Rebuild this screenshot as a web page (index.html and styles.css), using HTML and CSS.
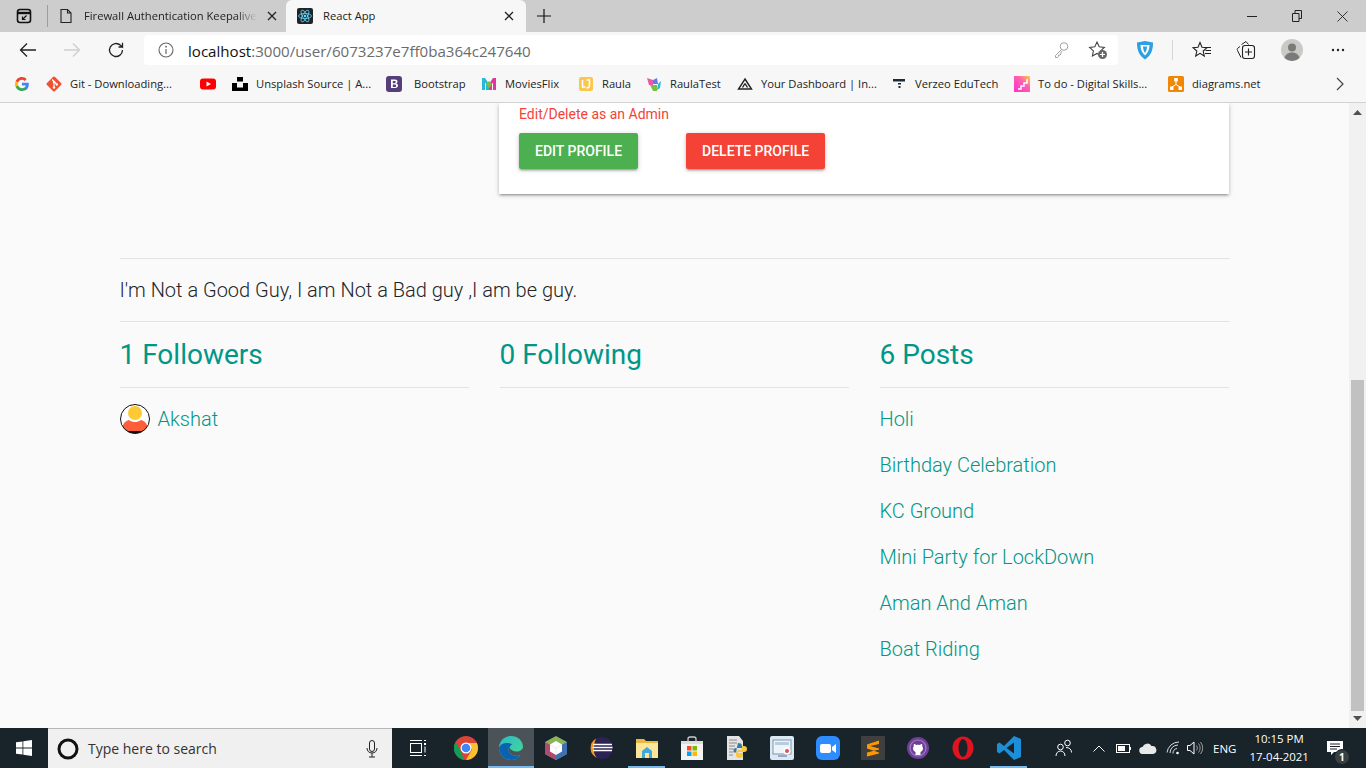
FILE: index.html
```html
<!DOCTYPE html>
<html>
<head>
  <meta name="viewport" content="width=device-width,initial-scale=1.0">
  <title>React App</title>
  <link rel="stylesheet" href="styles.css">
</head>
<body>
  <div class="tabstrip">
    <div class="tab-actions">
      <svg width="16" height="16" viewBox="0 0 16 16"><rect x="1.5" y="1.5" width="13" height="13" rx="2.5" fill="none" stroke="#111" stroke-width="1.6"/><path d="M2 5h12" stroke="#111" stroke-width="2.4"/><path d="M10.5 7.5 6.5 11.5M6.500 8.500v3h3" fill="none" stroke="#111" stroke-width="1.200"/></svg>
    </div>
    <div class="tab">
      <svg width="16" height="16" viewBox="0 0 16 16"><path d="M3 1.500h6.500l3.500 3.500v9.500H3zM9.500 1.500V5H13" fill="none" stroke="#222" stroke-width="1.100"/></svg>
      <span class="tab-title tab-title-fade">Firewall Authentication Keepalive</span>
      <svg class="tab-close" width="10" height="10" viewBox="0 0 10 10"><path d="M1 1l8 8M9 1 1 9" stroke="#222" stroke-width="1.300"/></svg>
    </div>
    <div class="tab tab-active">
      <svg width="16" height="16" viewBox="0 0 16 16"><rect width="16" height="16" rx="2" fill="#20232a"/><g fill="none" stroke="#61dafb" stroke-width=".8"><ellipse cx="8" cy="8" rx="6.500" ry="2.500"/><ellipse cx="8" cy="8" rx="6.500" ry="2.500" transform="rotate(60 8 8)"/><ellipse cx="8" cy="8" rx="6.500" ry="2.500" transform="rotate(120 8 8)"/></g><circle cx="8" cy="8" r="1.300" fill="#61dafb"/></svg>
      <span class="tab-title">React App</span>
      <svg class="tab-close" width="10" height="10" viewBox="0 0 10 10"><path d="M1 1l8 8M9 1 1 9" stroke="#222" stroke-width="1.300"/></svg>
    </div>
    <div class="new-tab">
      <svg width="14" height="14" viewBox="0 0 14 14"><path d="M7 0v14M0 7h14" stroke="#111" stroke-width="1.200"/></svg>
    </div>
    <div class="window-controls">
      <svg width="10" height="10" viewBox="0 0 10 10"><path d="M0 5.500h10" stroke="#222" stroke-width="1"/></svg>
      <svg width="10" height="12" viewBox="0 0 10 12"><path d="M.5 3.500h6.500v8H.5zM3 3.500V.5h6.500v8H7" fill="none" stroke="#222"/></svg>
      <svg width="11" height="11" viewBox="0 0 11 11"><path d="M.5.500l10 10M10.500.5l-10 10" stroke="#222" stroke-width=".9"/></svg>
    </div>
  </div>

  <div class="toolbar">
    <div class="tool">
      <svg width="18" height="16" viewBox="0 0 18 16"><path d="M17 8H1.500M8 1.500 1.500 8 8 14.500" fill="none" stroke="#222" stroke-width="1.300"/></svg>
    </div>
    <div class="tool">
      <svg width="18" height="16" viewBox="0 0 18 16"><path d="M1 8h15.500M10 1.500 16.500 8 10 14.500" fill="none" stroke="#cfcfcf" stroke-width="1.300"/></svg>
    </div>
    <div class="tool">
      <svg width="18" height="18" viewBox="0 0 18 18"><path d="M15.500 9a6.500 6.500 0 1 1-2-4.700L15.500 6V1.800M15.500 6h-4" fill="none" stroke="#222" stroke-width="1.300"/></svg>
    </div>
    <div class="address">
      <svg class="info-icon" width="16" height="16" viewBox="0 0 16 16"><circle cx="8" cy="8" r="7" fill="none" stroke="#666" stroke-width="1.100"/><path d="M8 7v5" stroke="#666" stroke-width="1.200"/><circle cx="8" cy="4.700" r=".9" fill="#666"/></svg>
      <span class="url"><span class="url-host">localhost</span>:3000/user/6073237e7ff0ba364c247640</span>
      <svg class="key-icon" width="16" height="18" viewBox="0 0 16 18"><circle cx="11" cy="5.500" r="3.800" fill="none" stroke="#a0a0a0"/><path d="M8.500 8.500 2.500 14.500v2h2l1-1v-1.500h1.500l1-1V11.500l1-1.500" fill="none" stroke="#a0a0a0"/></svg>
      <svg width="20" height="20" viewBox="0 0 20 20"><path d="M9 2l2.200 4.800 5.200.6-3.800 3.500 1 5.100L9 13.500 4.400 16l1-5.100L1.600 7.400l5.200-.6z" fill="none" stroke="#444" stroke-width="1.100"/><circle cx="14.500" cy="14.500" r="4.500" fill="#666"/><path d="M14.500 12v5M12 14.500h5" stroke="#fff" stroke-width="1.200"/></svg>
    </div>
    <div class="tool tool-shield">
      <svg width="18" height="20" viewBox="0 0 18 20"><path d="M1 2.500 9 1l8 1.500c0 7-1.500 12.500-8 17C2.500 15 1 9.500 1 2.500z" fill="#2e9fe0"/><path d="M4.500 5h9c0 4-1.300 7.500-4.500 10.500C5.800 12.500 4.500 9 4.500 5z" fill="#fff"/><path d="M7 6.500h4c0 2.500-.7 4.500-2 6.500-1.300-2-2-4-2-6.500z" fill="#2e9fe0"/></svg>
    </div>
    <div class="tool-sep"></div>
    <div class="tool tool-fav">
      <svg width="20" height="18" viewBox="0 0 20 18"><path d="M8 1.500l2 4.700 5 .5-3.800 3.300 1.100 5-4.300-2.600-4.300 2.600 1.100-5L1 6.700l5-.5z" fill="none" stroke="#222" stroke-width="1.100"/><path d="M14 6.500h5M13.500 9.500h5.500M13 12.500h6" stroke="#222"/></svg>
    </div>
    <div class="tool tool-fav">
      <svg width="20" height="20" viewBox="0 0 20 20"><path d="M5.500 4.500 10 1.500l2.500 3M4 6.500 2 8c-1 .8-1 1.500-.5 2.500L5 17.500" fill="none" stroke="#222"/><rect x="6.500" y="5.500" width="12" height="13" rx="2.500" fill="#f7f7f7" stroke="#222" stroke-width="1.100"/><path d="M12.500 8.500v7M9 12h7" stroke="#222" stroke-width="1.100"/></svg>
    </div>
    <div class="tool tool-avatar">
      <svg width="22" height="22" viewBox="0 0 22 22"><circle cx="11" cy="11" r="11" fill="#c9c9c6"/><circle cx="11" cy="8.500" r="4" fill="#7a7a78"/><path d="M3.500 19c1-4 4-5.500 7.500-5.500s6.500 1.500 7.500 5.500a11 11 0 0 1-15 0z" fill="#7a7a78"/></svg>
    </div>
    <div class="tool tool-more">
      <svg width="14" height="4" viewBox="0 0 14 4"><circle cx="2" cy="2" r="1.200" fill="#222"/><circle cx="7" cy="2" r="1.200" fill="#222"/><circle cx="12" cy="2" r="1.200" fill="#222"/></svg>
    </div>
  </div>

  <div class="bookmarks">
    <div class="bookmark">
      <svg width="16" height="16" viewBox="0 0 16 16"><path d="M14.800 8.200c0-.5 0-1-.1-1.500H8v2.900h3.800a3.300 3.300 0 0 1-1.400 2.100v1.800h2.300c1.400-1.300 2.100-3.100 2.100-5.300z" fill="#4285f4"/><path d="M8 15c1.900 0 3.500-.6 4.700-1.700l-2.300-1.800c-.6.400-1.400.7-2.400.7-1.800 0-3.400-1.200-3.900-2.900H1.700v1.800A7 7 0 0 0 8 15z" fill="#34a853"/><path d="M4.100 9.300a4.300 4.300 0 0 1 0-2.700V4.800H1.700a7 7 0 0 0 0 6.300z" fill="#fbbc05"/><path d="M8 3.800c1 0 2 .4 2.700 1.100l2-2A7 7 0 0 0 1.700 4.800l2.400 1.800C4.600 5 6.200 3.800 8 3.800z" fill="#ea4335"/></svg>
    </div>
    <div class="bookmark">
      <svg width="16" height="16" viewBox="0 0 16 16"><rect x="2.300" y="2.300" width="11.400" height="11.400" rx="1.500" transform="rotate(45 8 8)" fill="#f05133"/><path d="M6 3.500 11 8.500M8 6v6" stroke="#fff" stroke-width="1.100"/><circle cx="8" cy="6" r="1.200" fill="#fff"/><circle cx="8" cy="11.500" r="1.200" fill="#fff"/><circle cx="10.800" cy="8.500" r="1.200" fill="#fff"/></svg>
      <span>Git - Downloading...</span>
    </div>
    <div class="bookmark">
      <svg width="16" height="16" viewBox="0 0 16 16"><rect y="2.500" width="16" height="11" rx="3" fill="#f00"/><path d="M6.500 5.500v5L11 8z" fill="#fff"/></svg>
    </div>
    <div class="bookmark">
      <svg width="16" height="16" viewBox="0 0 16 16"><path d="M5 1h6v4.500H5zM0 7h5v4.500h6V7h5v8H0z" fill="#000"/></svg>
      <span>Unsplash Source | A...</span>
    </div>
    <div class="bookmark bookmark-wide">
      <svg width="16" height="16" viewBox="0 0 16 16"><rect width="16" height="16" rx="3" fill="#563d7c"/><path d="M5 3.500h4c1.500 0 2.500.8 2.500 2.100 0 .9-.5 1.600-1.300 1.900 1.100.2 1.800 1 1.800 2.100 0 1.500-1.100 2.400-2.900 2.400H5zM6.800 5v2.200h1.700c.8 0 1.200-.4 1.200-1.100S9.300 5 8.500 5zm0 3.600V11h1.900c.9 0 1.400-.4 1.400-1.200s-.5-1.200-1.500-1.200z" fill="#fff"/></svg>
      <span>Bootstrap</span>
    </div>
    <div class="bookmark">
      <svg width="16" height="16" viewBox="0 0 16 16"><path d="M1 2h3l4 6v6H5V8l-1-1.500V14H1z" fill="#27b8d6"/><path d="M15 2h-3L8 8v6h3V8l1-1.500V14h3z" fill="#e0389a"/><path d="M5 8 8 12.500 11 8 8 5z" fill="#7bc043"/></svg>
      <span>MoviesFlix</span>
    </div>
    <div class="bookmark">
      <svg width="16" height="16" viewBox="0 0 16 16"><rect x="1" y="1" width="14" height="14" rx="2" fill="#fbc64e"/><path d="M4.500 4v7h3M8.500 4h3v5c0 2-1 3-3 3" fill="none" stroke="#fff" stroke-width="1.500"/></svg>
      <span>Raula</span>
    </div>
    <div class="bookmark">
      <svg width="16" height="16" viewBox="0 0 16 16"><path d="M1 2l6 2v5H3z" fill="#e85aa5"/><path d="M7 4l4-2 1 6H7z" fill="#5b7fe8"/><path d="M12 8l3-3-1 7-3 2z" fill="#2db6d8"/><path d="M4 9h7v6H7z" fill="#7bc043"/></svg>
      <span>RaulaTest</span>
    </div>
    <div class="bookmark">
      <svg width="16" height="16" viewBox="0 0 16 16"><path d="M8 3 14.500 13h-13zM8 7.500 5.500 11.500M8 7.500l2.500 4" fill="none" stroke="#222" stroke-width="1.400"/></svg>
      <span>Your Dashboard | In...</span>
    </div>
    <div class="bookmark">
      <svg width="16" height="16" viewBox="0 0 16 16"><path d="M2 3h12v2.500H2z" fill="#1c2a3a"/><path d="M7 7h3v1.500H7zM7.500 10H9.500v2H7.500z" fill="#1c2a3a"/></svg>
      <span>Verzeo EduTech</span>
    </div>
    <div class="bookmark">
      <svg width="16" height="16" viewBox="0 0 16 16"><defs><linearGradient id="todo" x1="0" y1="1" x2="1" y2="0"><stop offset="0" stop-color="#ff2fd0"/><stop offset=".6" stop-color="#ff5fb0"/><stop offset="1" stop-color="#ffd23a"/></linearGradient></defs><rect width="16" height="16" fill="url(#todo)"/><path d="M4 13h3v-3h3V7h3V3" fill="none" stroke="#fff" stroke-width="1.500"/></svg>
      <span>To do - Digital Skills...</span>
    </div>
    <div class="bookmark">
      <svg width="16" height="16" viewBox="0 0 16 16"><rect width="16" height="16" rx="1.500" fill="#f08705"/><path d="M8 5v3.500M8 8.500 4 11M8 8.500l4 2.500" stroke="#fff"/><path d="M6.200 2h3.600v3.500H6.200zM2 10.500h3.500V14H2zM10.500 10.500H14V14h-3.500z" fill="#fff"/></svg>
      <span>diagrams.net</span>
    </div>
    <div class="bookmark-more">
      <svg width="8" height="14" viewBox="0 0 8 14"><path d="M1 1l6 6-6 6" fill="none" stroke="#444" stroke-width="1.200"/></svg>
    </div>
  </div>

  <div class="viewport">
    <div class="page">
      <div class="container">
        <div class="profile-top">
          <div class="card">
            <p class="admin-note">Edit/Delete as an Admin</p>
            <div class="card-actions">
              <button type="button" class="btn btn-edit">Edit Profile</button>
              <button type="button" class="btn btn-delete">Delete Profile</button>
            </div>
          </div>
        </div>

        <hr class="rule rule-bio">
        <p class="bio">I'm Not a Good Guy, I am Not a Bad guy ,I am be guy.</p>
        <hr class="rule">

        <div class="columns">
          <div class="column">
            <h4>1 Followers</h4>
            <hr class="rule">
            <ul class="link-list">
              <li>
                <svg class="avatar" width="30" height="30" viewBox="0 0 30 30"><defs><clipPath id="face"><circle cx="15" cy="15" r="14.500"/></clipPath></defs><circle cx="15" cy="15" r="14.500" fill="#fff"/><g clip-path="url(#face)"><circle cx="15" cy="9" r="7" fill="#fdc934"/><path d="M2 27c0-7 3-10 7-11 2 1.500 4 2 6 2s4-.5 6-2c4 1 7 4 7 11z" fill="#ff5e3a"/><path d="M6 27h18v3H6z" fill="#111"/></g><circle cx="15" cy="15" r="14.500" fill="none" stroke="#111"/></svg>
                <a href="#">Akshat</a>
              </li>
            </ul>
          </div>
          <div class="column">
            <h4>0 Following</h4>
            <hr class="rule">
          </div>
          <div class="column">
            <h4>6 Posts</h4>
            <hr class="rule">
            <ul class="link-list">
              <li><a href="#">Holi</a></li>
              <li><a href="#">Birthday Celebration</a></li>
              <li><a href="#">KC Ground</a></li>
              <li><a href="#">Mini Party for LockDown</a></li>
              <li><a href="#">Aman And Aman</a></li>
              <li><a href="#">Boat Riding</a></li>
            </ul>
          </div>
        </div>
      </div>
    </div>
    <div class="scrollbar">
      <svg width="9" height="5" viewBox="0 0 9 5"><path d="M4.500 0 9 5H0z" fill="#505050"/></svg>
      <div class="scroll-track"><div class="scroll-thumb"></div></div>
      <svg width="9" height="5" viewBox="0 0 9 5"><path d="M4.500 5 9 0H0z" fill="#505050"/></svg>
    </div>
  </div>

  <div class="taskbar">
    <div class="start">
      <svg width="16" height="16" viewBox="0 0 16 16"><path d="M0 2.300 6.500 1.400v6.200H0zM7.300 1.300 16 0v7.600H7.300zM0 8.400h6.500v6.200L0 13.700zM7.300 8.400H16V16l-8.700-1.200z" fill="#fff"/></svg>
    </div>
    <div class="search">
      <svg class="cortana" width="22" height="22" viewBox="0 0 22 22"><circle cx="11" cy="11" r="9" fill="none" stroke="#111" stroke-width="3"/></svg>
      <span class="search-text">Type here to search</span>
      <svg width="12" height="18" viewBox="0 0 12 18"><rect x="3.500" y=".5" width="5" height="11" rx="2.500" fill="none" stroke="#222"/><path d="M1 8c0 3 2 5 5 5s5-2 5-5M6 13v4M3 17h6" fill="none" stroke="#222"/></svg>
    </div>
    <div class="task task-view">
      <svg width="16" height="16" viewBox="0 0 16 16"><path d="M0 .5h12M0 15.500h12M14 .5h2M14 15.500h2" stroke="#fff"/><rect x=".5" y="3.500" width="11" height="9" fill="none" stroke="#fff"/><rect x="14" y="3" width="2" height="2" fill="#fff"/><path d="M15 6.500v6" stroke="#fff"/></svg>
    </div>
    <div class="task">
      <svg width="24" height="24" viewBox="0 0 24 24"><circle cx="12" cy="12" r="12" fill="#db4437"/><path d="M12 24A12 12 0 0 1 1.600 6L7 15.500l3 8.400z" fill="#0f9d58"/><path d="M24 12c0 6.600-5.400 12-12 12l6-10.400L12 7h10.900c.7 1.500 1.100 3.200 1.100 5z" fill="#fbc02d"/><circle cx="12" cy="12" r="5.500" fill="#fff"/><circle cx="12" cy="12" r="4.300" fill="#4285f4"/></svg>
    </div>
    <div class="task task-open task-current">
      <svg width="24" height="24" viewBox="0 0 24 24"><defs><linearGradient id="edge" x1="0" y1="0" x2="1" y2="1"><stop offset="0" stop-color="#2fb8c8"/><stop offset="1" stop-color="#45dc8e"/></linearGradient></defs><path d="M12 0C5.500 0 .3 5 0 11.500c0 6.800 5.400 12.500 12 12.500 4 0 7.500-2 9.700-5-3.500 1.500-8 1-10.500-1.500C9 15.500 8.700 12.800 10.500 11.500c1.500 3.500 6.500 5 10 3.500 2-.9 3.500-2.300 3.500-4C24 4.500 18.500 0 12 0z" fill="url(#edge)"/><path d="M0 11.500c0 6.800 5.400 12.500 12 12.500 4 0 7.500-2 9.700-5-3.500 1.500-8 1-10.500-1.500C9 15.500 8.700 12.800 10.500 11.500 11 10 12 9 13.500 8.300 8 5.500 1.500 7 0 11.500z" fill="#0b63b0"/></svg>
    </div>
    <div class="task">
      <svg width="22" height="24" viewBox="0 0 22 24"><path d="M11 0 22 6v12l-11 6L0 18V6z" fill="#8cb45a"/><path d="M0 6l11 6v12L0 18z" fill="#b04a6e"/><path d="M22 6l-11 6v12l11-6z" fill="#3f6fb5"/><path d="M11 5l6 3.500v7L11 19l-6-3.500v-7z" fill="#fff"/><path d="M11 12 5 8.500M11 12l6-3.500M11 12v7" stroke="#ddd" stroke-width=".6"/></svg>
    </div>
    <div class="task">
      <svg width="24" height="24" viewBox="0 0 24 24"><circle cx="13" cy="12" r="11" fill="#2c2255"/><path d="M7 2.500A11 11 0 0 0 8 22a12 12 0 0 1-3-10c0-4 1-7 2-9.500z" fill="#f7941e"/><path d="M4 8.500h19M3.500 11.500h20M4 14.500h19" stroke="#fff" stroke-width="1.300"/></svg>
    </div>
    <div class="task task-open">
      <svg width="22" height="20" viewBox="0 0 22 20"><path d="M0 1h8l2 2h12v17H0z" fill="#e8b93f"/><path d="M0 5h22v15H0z" fill="#fce59a"/><path d="M6 13l5-4 5 4v7H6z" fill="#3fa9dc"/><path d="M9 15h4v5H9z" fill="#fce59a"/></svg>
    </div>
    <div class="task">
      <svg width="22" height="24" viewBox="0 0 22 24"><path d="M7 5V3a2 2 0 0 1 2-2h4a2 2 0 0 1 2 2v2" fill="none" stroke="#ccc" stroke-width="1.300"/><rect y="5" width="22" height="19" fill="#f3f3f3"/><rect y="5" width="22" height="3" fill="#ddd"/><path d="M6 10h4.500v4.500H6z" fill="#f25022"/><path d="M11.500 10H16v4.500h-4.500z" fill="#7fba00"/><path d="M6 15.500h4.500V20H6z" fill="#00a4ef"/><path d="M11.500 15.500H16V20h-4.500z" fill="#ffb900"/></svg>
    </div>
    <div class="task">
      <svg width="24" height="24" viewBox="0 0 24 24"><path d="M2 0h12l4 5v19H2z" fill="#e4e4e4"/><path d="M4 4h8M4 7h8M4 10h6M4 13h5M4 16h4M4 19h4" stroke="#8b8b8b"/><path d="M13 7c3 0 4 1 4 3v2h-6c-1.500 0-2.500 1.200-2.500 3v1.500h3v-3z" fill="#3a78ab"/><path d="M14 22c3 0 4-1 4-3v-2h-5v-1h6c2 0 3-1 3-3s-1-3-3-3h-2v2c0 1.500-1 2-2 2h-1c-2 0-3 1-3 2.500V19c0 2 1 3 3 3z" fill="#f9c83d"/></svg>
    </div>
    <div class="task">
      <svg width="24" height="24" viewBox="0 0 24 24"><rect width="24" height="24" rx="2" fill="#dbe9f5"/><rect x="3" y="4" width="18" height="14" fill="#eef4fa" stroke="#7b95ad"/><path d="M5 6h14v3H5z" fill="#b9cbdc"/><path d="M8 20h9" stroke="#7b95ad" stroke-width="1.500"/><circle cx="17" cy="15" r="3.500" fill="#fff"/><circle cx="17" cy="15" r="2" fill="#e4504b"/></svg>
    </div>
    <div class="task">
      <svg width="24" height="24" viewBox="0 0 24 24"><rect width="24" height="24" rx="6" fill="#2d8cff"/><rect x="4" y="8" width="11" height="9" rx="2" fill="#fff"/><path d="M16 11l4-3v9l-4-3z" fill="#fff"/></svg>
    </div>
    <div class="task">
      <svg width="24" height="24" viewBox="0 0 24 24"><rect width="24" height="24" rx="1" fill="#3f3f3f"/><path d="M18 4.500 6 8.500v4l12 4v-4L9 10l9-2zM6 16.500l12-3v4l-12 3z" fill="#ff9800"/></svg>
    </div>
    <div class="task">
      <svg width="22" height="22" viewBox="0 0 22 22"><circle cx="11" cy="11" r="11" fill="#6e3f96"/><circle cx="11" cy="11" r="8" fill="none" stroke="#a47cc4" stroke-width="1.200"/><path d="M8.500 18v-3c-1-.4-2.500-1.500-2.500-3.500 0-1 .3-1.700.8-2.300-.2-.6-.2-1.400.1-2.200 1 0 1.700.5 2.200 1 1.200-.3 2.600-.3 3.800 0 .5-.5 1.200-1 2.200-1 .3.800.3 1.600.1 2.200.5.600.8 1.300.8 2.300 0 2-1.500 3.100-2.500 3.500v3z" fill="#fff"/></svg>
    </div>
    <div class="task">
      <svg width="22" height="24" viewBox="0 0 22 24"><ellipse cx="11" cy="12" rx="10.500" ry="11.500" fill="#e0141e"/><ellipse cx="11" cy="12" rx="4.500" ry="9" fill="#18232a"/></svg>
    </div>
    <div class="task task-open">
      <svg width="24" height="24" viewBox="0 0 24 24"><path d="M17 0 7 10 2.500 6.500 0 8v8l2.500 1.500L7 14l10 10 7-3V3z" fill="#1b8fd8"/><path d="M17 6.500v11L9.500 12z" fill="#18232a"/></svg>
    </div>
    <div class="tray">
      <svg class="tray-people" width="18" height="18" viewBox="0 0 18 18"><circle cx="5.500" cy="8" r="2.800" fill="none" stroke="#fff"/><path d="M1 17c0-3 2-5 4.500-5s4.500 2 4.500 5" fill="none" stroke="#fff"/><circle cx="12.500" cy="4" r="2.800" fill="none" stroke="#fff"/><path d="M11 8.500c3 0 5.500 1.500 5.500 5" fill="none" stroke="#fff"/></svg>
      <svg class="tray-caret" width="12" height="7" viewBox="0 0 12 7"><path d="M.5 6.500 6 1l5.500 5.500" fill="none" stroke="#fff"/></svg>
      <svg class="tray-battery" width="16" height="9" viewBox="0 0 16 9"><rect x=".5" y=".5" width="13" height="8" fill="none" stroke="#fff"/><rect x="2" y="2" width="7" height="5" fill="#fff"/><path d="M14.500 3v3" stroke="#fff"/></svg>
      <svg class="tray-cloud" width="18" height="11" viewBox="0 0 18 11"><path d="M4 11a3.500 3.500 0 0 1-.5-7A5 5 0 0 1 12.500 3a4 4 0 0 1 1.500 8z" fill="#e9e9e9"/></svg>
      <svg class="tray-wifi" width="16" height="14" viewBox="0 0 16 14"><path d="M1 11.500A12 12 0 0 1 13 1M4 12a8 8 0 0 1 8-8M7 12.500A4.500 4.500 0 0 1 11 7.500" fill="none" stroke="#ddd"/><circle cx="11.500" cy="12" r="1.300" fill="#fff"/></svg>
      <svg class="tray-sound" width="16" height="14" viewBox="0 0 16 14"><path d="M.5 4.500H3L7 1v12L3 9.500H.5z" fill="none" stroke="#fff"/><path d="M9.500 4.500a4 4 0 0 1 0 5M11.500 2.500a7 7 0 0 1 0 9M13.500 1a10 10 0 0 1 0 12" fill="none" stroke="#9a9a9a"/></svg>
      <span class="lang">ENG</span>
      <div class="clock"><span>10:15 PM</span><span>17-04-2021</span></div>
      <div class="notify">
        <svg width="16" height="14" viewBox="0 0 16 14"><path d="M0 0h16v11H7l-3 3v-3H0z" fill="#fff"/><path d="M3 3h10M3 5.500h10M3 8h7" stroke="#18232a"/></svg>
        <span class="notify-badge">1</span>
      </div>
    </div>
  </div>
</body>
</html>
```

FILE: styles.css
```css
* {
  box-sizing: border-box;
}

html,
body {
  height: 100%;
}

body {
  margin: 0;
  display: flex;
  flex-direction: column;
  overflow: hidden;
  font-family: "Open Sans", "Noto Sans", sans-serif;
  background: #fafafa;
}

svg {
  display: block;
  flex: none;
}

/* browser tabs */
.tabstrip {
  display: flex;
  flex: none;
  height: 32px;
  background: #cdcdcd;
  color: #222;
  font-size: 11.2px;
}

.tab-actions {
  display: flex;
  align-items: center;
  justify-content: center;
  width: 48px;
  border-right: 1px solid #9d9d9d;
  margin: 5px 0 5px 0;
}

.tab {
  display: flex;
  align-items: center;
  gap: 10px;
  width: 238px;
  padding: 0 10px 0 10px;
}

.tab-active {
  width: 240px;
  padding: 0 12px 0 11px;
  background: #f7f7f7;
  border-radius: 6px 6px 0 0;
}

.tab-title {
  flex: 1;
  margin-bottom: 2px;
  white-space: nowrap;
}

.tab-title-fade {
  -webkit-mask-image: linear-gradient(to right, #000 88%, transparent 100%);
  mask-image: linear-gradient(to right, #000 88%, transparent 100%);
}

.new-tab {
  display: flex;
  align-items: center;
  justify-content: center;
  width: 36px;
}

.window-controls {
  display: flex;
  align-items: center;
  gap: 35px;
  margin-left: auto;
  padding-right: 18px;
}

/* address bar */
.toolbar {
  display: flex;
  flex: none;
  align-items: center;
  height: 36px;
  background: #f7f7f7;
  padding-left: 6px;
}

.tool {
  display: flex;
  align-items: center;
  justify-content: center;
  width: 44px;
  height: 30px;
}

.address {
  display: flex;
  align-items: center;
  width: 974px;
  height: 30px;
  margin-left: 6px;
  padding: 0 10px 0 14px;
  background: #fff;
  border-radius: 4px;
}

.info-icon {
  margin-right: 14px;
}

.url {
  flex: 1;
  margin-top: 1px;
  font-size: 15.1px;
  color: #6b6b6b;
}

.url-host {
  color: #111;
}

.key-icon {
  margin-right: 19px;
}

.tool-shield {
  width: 36px;
  margin-left: 9px;
}

.tool-sep {
  width: 1px;
  height: 20px;
  margin: 0 7px 0 9px;
  background: #d5d5d5;
}

.tool-fav {
  width: 44px;
}

.tool-avatar {
  width: 48px;
}

.tool-more {
  width: 44px;
}

/* bookmarks row */
.bookmarks {
  display: grid;
  flex: none;
  grid-template-columns: 32px 154px 32px 154px 95px 97px 68px 91px 154px 123px 154px 168px 8px;
  align-items: center;
  height: 35px;
  padding: 0 0 2px 14px;
  background: #f7f7f7;
  border-bottom: 1px solid #d2d2d2;
  font-size: 11.2px;
  color: #222;
  white-space: nowrap;
}

.bookmark {
  display: flex;
  align-items: center;
  gap: 8px;
}

.bookmark span {
  margin-bottom: 2px;
}

.bookmark-wide {
  gap: 12px;
}

/* page area */
.viewport {
  display: flex;
  flex: 1;
  min-height: 0;
}

.page {
  flex: 1;
  overflow: hidden;
  background: #fafafa;
}

.container {
  width: 1110px;
  margin-left: 119.5px;
  font-family: Roboto, sans-serif;
}

.profile-top {
  padding-left: 379.5px;
}

.card {
  width: 730px;
  height: 91px;
  padding: 3px 20px 0;
  background: #fff;
  box-shadow: 0 2px 2px 0 rgba(0, 0, 0, 0.14), 0 3px 1px -2px rgba(0, 0, 0, 0.12), 0 1px 5px 0 rgba(0, 0, 0, 0.2);
}

.admin-note {
  margin: 0;
  font-size: 14px;
  line-height: 17px;
  font-weight: 400;
  color: #f44336;
}

.card-actions {
  display: flex;
  gap: 48px;
  margin-top: 10px;
}

.btn {
  height: 36px;
  padding: 0 16px;
  border: none;
  border-radius: 2px;
  color: #fff;
  font-family: Roboto, sans-serif;
  font-size: 14px;
  font-weight: 500;
  text-transform: uppercase;
  box-shadow: 0 2px 2px 0 rgba(0, 0, 0, 0.14), 0 3px 1px -2px rgba(0, 0, 0, 0.12), 0 1px 5px 0 rgba(0, 0, 0, 0.2);
}

.btn-edit {
  background: #4caf50;
}

.btn-delete {
  background: #f44336;
}

.rule {
  margin: 0;
  border: none;
  border-top: 1px solid #e3e3e3;
}

.rule-bio {
  margin-top: 64px;
}

.bio {
  margin: 0;
  padding: 17px 0 16px;
  font-size: 20px;
  line-height: 29px;
  font-weight: 300;
  color: #212529;
}

.columns {
  display: grid;
  grid-template-columns: repeat(3, 350px);
  gap: 30px;
}

.column .rule {
  margin-right: 1px;
}

.column h4 {
  margin: 0;
  padding: 16px 0;
  font-size: 28px;
  line-height: 33px;
  font-weight: 400;
  color: #009688;
}

.link-list {
  list-style: none;
  margin: 0;
  padding: 8px 0 0;
}

.link-list li {
  display: flex;
  align-items: center;
  gap: 8px;
  height: 46px;
  font-size: 20px;
  font-weight: 300;
}

.link-list a {
  color: #009688;
  text-decoration: none;
}

/* page scrollbar */
.scrollbar {
  display: flex;
  flex: none;
  flex-direction: column;
  align-items: center;
  width: 17px;
  padding: 7px 0;
  background: #f1f1f1;
}

.scroll-track {
  display: flex;
  flex: 1;
  align-items: flex-end;
  width: 100%;
  padding: 0 2px 5px;
}

.scroll-thumb {
  width: 100%;
  height: 331px;
  background: #c1c1c1;
}

/* windows taskbar */
.taskbar {
  display: flex;
  flex: none;
  align-items: stretch;
  height: 40px;
  background: #18232a;
  color: #fff;
  font-family: "Open Sans", "Noto Sans", sans-serif;
}

.start {
  display: flex;
  align-items: center;
  justify-content: center;
  width: 48px;
}

.search {
  display: flex;
  align-items: center;
  width: 344px;
  padding: 0 14px 0 9px;
  background: #f0f0f0;
  border-top: 1px solid #b8b8b8;
  color: #333;
}

.cortana {
  margin-right: 9px;
}

.search-text {
  flex: 1;
  font-size: 14px;
}

.task {
  display: flex;
  align-items: center;
  justify-content: center;
  position: relative;
  width: 45.25px;
}

.task-view {
  width: 51px;
}

.task-current {
  background: #4b5358;
}

.task-open::after {
  content: "";
  position: absolute;
  left: 4px;
  right: 4px;
  bottom: 0;
  height: 2px;
  background: #76b9ed;
}

.task-current::after {
  left: 0;
  right: 0;
}

.tray {
  display: flex;
  flex: 1;
  align-items: center;
  padding-left: 23.75px;
}

.tray-people {
  margin-right: 20px;
}

.tray-caret {
  margin-right: 11px;
}

.tray-battery {
  margin-right: 7px;
}

.tray-cloud {
  margin-right: 9px;
}

.tray-wifi {
  margin-right: 5px;
}

.tray-sound {
  margin-right: 10px;
}

.lang {
  font-size: 11.5px;
}

.clock {
  display: flex;
  flex-direction: column;
  align-items: center;
  gap: 2px;
  margin-left: 13px;
  font-size: 11.4px;
  line-height: 16px;
}

.notify {
  position: relative;
  margin-left: 18px;
}

.notify-badge {
  position: absolute;
  top: 8px;
  left: 7px;
  width: 16px;
  height: 16px;
  border-radius: 50%;
  background: #3a3f42;
  border: 1px solid #18232a;
  font-size: 10px;
  font-weight: 700;
  line-height: 14px;
  text-align: center;
}
```
